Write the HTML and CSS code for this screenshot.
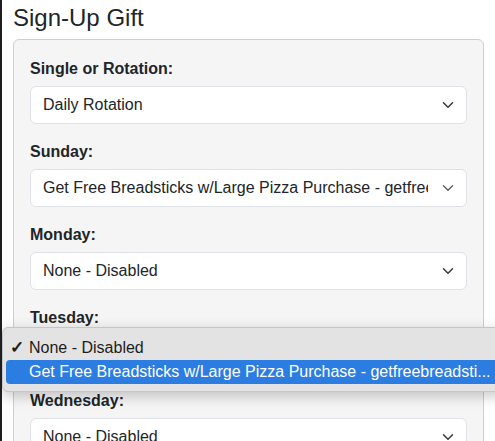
FILE: index.html
```html
<!DOCTYPE html>
<html lang="en">
<head>
    <meta charset="UTF-8">
    <meta name="viewport" content="width=device-width, initial-scale=1.0">
    <title>Sign-Up Gift</title>
    <link rel="stylesheet" href="styles.css">
</head>
<body>
    <div class="page">
        <h4 class="title">Sign-Up Gift</h4>

        <div class="card">
            <div class="field">
                <label>Single or Rotation:</label>
                <div class="select">
                    <span class="select-text">Daily Rotation</span>
                    <svg class="chevron" viewBox="0 0 16 16"><path d="M2 5l6 6 6-6"/></svg>
                </div>
            </div>
            <div class="field">
                <label>Sunday:</label>
                <div class="select">
                    <span class="select-text">Get Free Breadsticks w/Large Pizza Purchase - getfreebreadsticks</span>
                    <svg class="chevron thin" viewBox="0 0 16 16"><path d="M2 5l6 6 6-6"/></svg>
                </div>
            </div>
            <div class="field">
                <label>Monday:</label>
                <div class="select">
                    <span class="select-text">None - Disabled</span>
                    <svg class="chevron" viewBox="0 0 16 16"><path d="M2 5l6 6 6-6"/></svg>
                </div>
            </div>
            <div class="field">
                <label>Tuesday:</label>
                <div class="select">
                    <span class="select-text"></span>
                    <svg class="chevron" viewBox="0 0 16 16"><path d="M2 5l6 6 6-6"/></svg>
                </div>
            </div>
            <div class="field">
                <label>Wednesday:</label>
                <div class="select">
                    <span class="select-text">None - Disabled</span>
                    <svg class="chevron" viewBox="0 0 16 16"><path d="M2 5l6 6 6-6"/></svg>
                </div>
            </div>
        </div>

        <!-- open native dropdown for Tuesday -->
        <div class="popup">
            <div class="option checked"><span class="check">&#10003;</span>None - Disabled</div>
            <div class="option active">Get Free Breadsticks w/Large Pizza Purchase - getfreebreadsti...</div>
        </div>
    </div>
</body>
</html>
```

FILE: styles.css
```css
html {
    overflow: hidden;
}
body {
    font-family: "Liberation Sans", Arial, sans-serif;
    background-color: #fff;
    color: #212529;
    margin: 0;
    padding: 0;
}
.page {
    position: relative;
    height: 441px;
    overflow: hidden;
    box-sizing: border-box;
    border-left: 2px solid #1e1e1e;
    padding: 4px 11px 0 11px;
}
.title {
    font-size: 24px;
    font-weight: 400;
    line-height: 1.2;
    margin: 0 0 6px 0;
}
.card {
    background-color: #f5f5f5;
    border: 1px solid #cfcfcf;
    border-radius: 6px;
    padding: 17px 16px 4px 16px;
}
.field {
    margin-bottom: 16px;
}
.field label {
    display: block;
    font-size: 16px;
    font-weight: bold;
    line-height: 24px;
    margin-bottom: 5px;
}
.select {
    display: flex;
    align-items: center;
    height: 38px;
    box-sizing: border-box;
    background-color: #fff;
    border: 1px solid #dee2e6;
    border-radius: 6px;
    padding: 0 12px 0 12px;
    font-size: 16px;
}
.select-text {
    flex: 1;
    white-space: nowrap;
    overflow: hidden;
    margin-right: 14px;
}
.chevron {
    width: 12px;
    height: 12px;
    fill: none;
    stroke: #343a40;
    stroke-width: 2;
    stroke-linecap: round;
    stroke-linejoin: round;
}
.chevron.thin {
    stroke: #555;
    stroke-width: 1.6;
}
.popup {
    position: absolute;
    left: 0;
    top: 327px;
    width: 510px;
    box-sizing: border-box;
    padding: 8px 0 7px 3px;
    background-color: #e3e3e3;
    border: 1px solid #c6c6c6;
    border-radius: 6px;
    box-shadow: 0 4px 14px rgba(0,0,0,0.22);
    font-size: 16px;
}
.option {
    height: 24px;
    line-height: 24px;
    padding-left: 23px;
    white-space: nowrap;
    color: #1d1d1d;
    position: relative;
}
.option .check {
    position: absolute;
    left: 4px;
    font-size: 17px;
    font-weight: bold;
}
.option.active {
    background-color: #2b7de2;
    color: #fff;
    border-radius: 4px;
}
```
